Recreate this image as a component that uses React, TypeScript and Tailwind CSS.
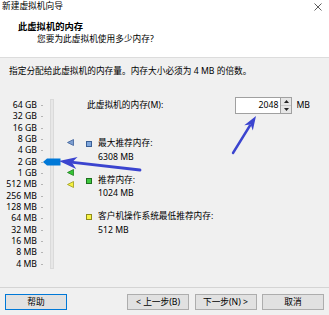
const labels = [
  "64 GB", "32 GB", "16 GB", "8 GB", "4 GB", "2 GB", "1 GB",
  "512 MB", "256 MB", "128 MB", "64 MB", "32 MB", "16 MB", "8 MB", "4 MB",
];

const font = {
  fontFamily: '"Segoe UI", "Noto Sans", "Noto Sans CJK SC", sans-serif',
};

const Marker = ({ top, fill, stroke }: { top: number; fill: string; stroke: string }) => (
  <svg className="absolute left-0" style={{ top }} width="7" height="7" viewBox="0 0 7 7">
    <polygon points="0.5,3.5 6.5,0.5 6.5,6.5" fill={fill} stroke={stroke} strokeWidth="0.8" />
  </svg>
);

const Legend = ({ color, border, title, value }: { color: string; border: string; title: string; value: string }) => (
  <div className="flex">
    <div className={`mt-[4px] mr-[6px] h-[6px] w-[6px] border ${border} ${color}`} />
    <div className="leading-[13.5px]">
      <div>{title}</div>
      <div>{value}</div>
    </div>
  </div>
);

const Button = ({ children, primary }: { children: React.ReactNode; primary?: boolean }) => (
  <button
    className={`h-[16px] w-[62px] bg-[#e1e1e1] text-[8.7px] leading-none text-black border ${
      primary ? "border-[#0078d7]" : "border-[#adadad]"
    }`}
  >
    {children}
  </button>
);

export default function App() {
  return (
    <div style={font} className="relative flex h-[315px] w-[329px] flex-col overflow-hidden bg-[#f0f0f0] text-[8.7px] text-black">
      <div className="h-[58px] border-b border-[#dcdcdc] bg-white">
        <div className="flex h-[13px] items-center justify-between pl-[2px] pr-[7px] leading-[13px]">
          <span>新建虚拟机向导</span>
          <svg width="8" height="8" viewBox="0 0 8 8">
            <path d="M0.5 0.5 L7.5 7.5 M7.5 0.5 L0.5 7.5" stroke="#333" strokeWidth="0.8" />
          </svg>
        </div>
        <div className="mt-[7px] pl-[18px] text-[9.3px] font-bold leading-[13px]">此虚拟机的内存</div>
        <div className="pl-[37px] leading-[13px]">您要为此虚拟机使用多少内存?</div>
      </div>

      <div className="pl-[9px] pt-[7px] leading-[13px]">指定分配给此虚拟机的内存量。内存大小必须为 4 MB 的倍数。</div>

      <div className="mt-[19px] flex flex-1">
        <div className="w-[37px] pt-[3px] text-right">
          {labels.map((l) => (
            <div key={l} className="h-[11.33px] whitespace-nowrap leading-[11.33px]">{l}</div>
          ))}
        </div>
        <div className="ml-[4px] w-[3px] pt-[3px]">
          {labels.map((l) => (
            <div key={l} className="flex h-[11.33px] items-center">
              <div className="h-px w-[2px] bg-[#b4b4b4]" />
            </div>
          ))}
        </div>
        <div className="relative ml-[6px] mt-[2px] h-[170px] w-[4px] border border-[#dadada] bg-[#e7e7e7]">
          <svg className="absolute left-[-8px] top-[58px]" width="18" height="8" viewBox="0 0 18 8">
            <polygon points="0,4 4,0.5 17.5,0.5 17.5,7.5 4,7.5" fill="#0078d7" />
          </svg>
        </div>
        <div className="relative ml-[13px] w-[7px]">
          <Marker top={42} fill="#7d9ed0" stroke="#3c5f99" />
          <Marker top={72} fill="#34c534" stroke="#1e7e1e" />
          <Marker top={84} fill="#f4f040" stroke="#9c9a1a" />
        </div>
        <div className="ml-[12px] flex flex-1 flex-col pr-[19px]">
          <div className="flex h-[17px] items-center">
            <div className="flex-1 pl-[1px]">此虚拟机的内存(M):</div>
            <div className="flex h-[17px] w-[46px] items-center justify-end border border-[#a0a0a0] bg-white pr-[2px]">2048</div>
            <div className="flex h-[17px] w-[11px] flex-col border border-l-0 border-[#a0a0a0] bg-[#e6e6e6]">
              <div className="flex flex-1 items-center justify-center border-b border-[#c8c8c8]">
                <svg width="5" height="3" viewBox="0 0 5 3"><polygon points="0,3 2.5,0 5,3" fill="#222" /></svg>
              </div>
              <div className="flex flex-1 items-center justify-center">
                <svg width="5" height="3" viewBox="0 0 5 3"><polygon points="0,0 2.5,3 5,0" fill="#222" /></svg>
              </div>
            </div>
            <div className="ml-[4px]">MB</div>
          </div>
          <div className="mt-[23px] flex flex-col gap-[9.5px]">
            <Legend color="bg-[#7fa7dd]" border="border-[#3a5f96]" title="最大推荐内存:" value="6308 MB" />
            <Legend color="bg-[#3ec83e]" border="border-[#1e6f1e]" title="推荐内存:" value="1024 MB" />
            <Legend color="bg-[#f8f444]" border="border-[#8f8c1c]" title="客户机操作系统最低推荐内存:" value="512 MB" />
          </div>
        </div>
      </div>

      <div className="flex h-[28px] border-t border-[#d4d4d4] px-[5px] pt-[6px]">
        <Button primary>帮助</Button>
        <div className="ml-auto flex gap-[5.5px]">
          <Button>&lt; 上一步(B)</Button>
          <Button>下一步(N) &gt;</Button>
          <Button>取消</Button>
        </div>
      </div>

      <svg className="pointer-events-none absolute left-0 top-0" width="329" height="315" viewBox="0 0 329 315">
        <line x1="140" y1="170" x2="73" y2="162.3" stroke="#3b44cf" strokeWidth="2.8" strokeLinecap="round" />
        <polygon points="59,161 77.6,157 71.9,162.4 76.2,169" fill="#3b44cf" />
        <line x1="233" y1="153" x2="250" y2="125.5" stroke="#3b44cf" strokeWidth="2.4" strokeLinecap="round" />
        <polygon points="256,116 252.8,130.5 250.7,124.5 244.3,125.3" fill="#3b44cf" />
      </svg>
    </div>
  );
}
